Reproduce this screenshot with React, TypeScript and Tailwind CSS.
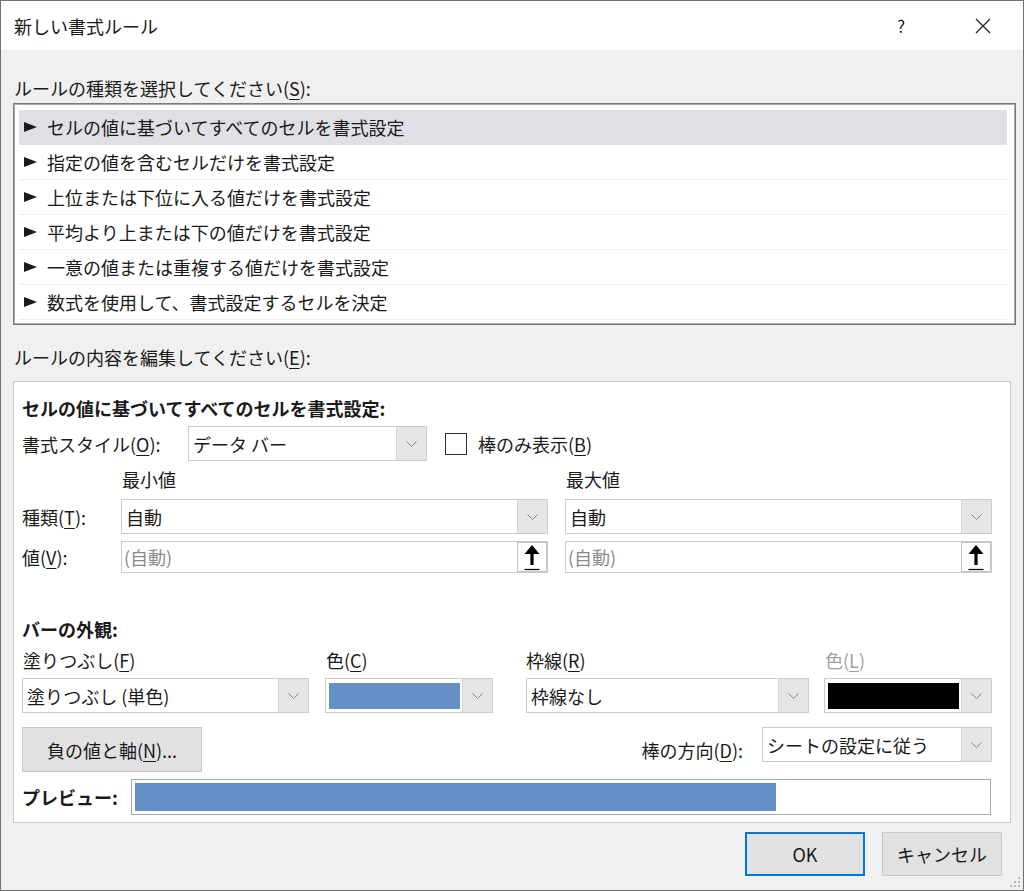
import React from "react";
import clsx from "clsx";

const rules = [
  "セルの値に基づいてすべてのセルを書式設定",
  "指定の値を含むセルだけを書式設定",
  "上位または下位に入る値だけを書式設定",
  "平均より上または下の値だけを書式設定",
  "一意の値または重複する値だけを書式設定",
  "数式を使用して、書式設定するセルを決定",
];

const Chevron = () => (
  <svg width="11" height="6" viewBox="0 0 11 6">
    <path d="M0.5 0.5 L5.5 5.5 L10.5 0.5" fill="none" stroke="#858585" strokeWidth="1" />
  </svg>
);

const UpArrow = () => (
  <svg width="18" height="28" viewBox="0 0 18 28">
    <path d="M9 2 L16.5 11 L10.6 11 L10.6 22 L7.4 22 L7.4 11 L1.5 11 Z" fill="#000" />
    <path d="M1.5 26.5 H16.5" stroke="#000" strokeWidth="1.2" />
  </svg>
);

function Select({ className, children }: { className: string; children: React.ReactNode }) {
  return (
    <div className={clsx("flex border border-[#cccccc] bg-white", className)}>
      <div className="flex-1 min-w-0 flex items-center">{children}</div>
      <div className="w-[30px] flex items-center justify-center bg-[#e5e5e5] border-l border-[#d6d6d6]">
        <Chevron />
      </div>
    </div>
  );
}

function ValueInput({ className }: { className: string }) {
  return (
    <div className={clsx("flex h-[32px] border border-[#cccccc] bg-white", className)}>
      <div className="flex-1 pl-[2px] flex items-center text-[#8a8a8a]">(自動)</div>
      <div className="w-[30px] flex items-center justify-center bg-white border border-[#c4c4c4]">
        <UpArrow />
      </div>
    </div>
  );
}

const U = ({ c }: { c: string }) => <span className="underline underline-offset-[3px] decoration-1">{c}</span>;

export default function App() {
  return (
    <div className="relative w-[1024px] h-[891px] border border-[#707070] bg-[#f0f0f0] flex flex-col text-[18px] leading-[24px] text-[#1a1a1a] font-['Noto_Sans_CJK_JP','Noto_Sans',sans-serif]">
      {/* title bar */}
      <div className="h-[49px] bg-white flex items-center pl-[13px] shrink-0">
        <span>新しい書式ルール</span>
        <span className="ml-auto mr-[70px] text-[17px]">?</span>
        <svg width="16" height="16" viewBox="0 0 16 16" className="mr-[32px]">
          <path d="M1 1 L15 15 M15 1 L1 15" stroke="#222" strokeWidth="1.3" />
        </svg>
      </div>

      <div className="px-[12px] flex flex-col">
        <div className="pt-[26px] pl-[1px]">
          ルールの種類を選択してください(<U c="S" />):
        </div>

        <div className="mt-[3px] w-[1003px] h-[222px] border border-[#7b7b7b] shadow-[inset_0_0_0_1px_#a8a8a8] bg-white p-[6px] pl-[5px] pr-[8px]">
          {rules.map((r, i) => (
            <div
              key={r}
              className={clsx(
                "h-[35px] flex items-center pl-[5px] gap-[10px] border-b",
                i === 0 ? "bg-[#dfdfe5] border-transparent" : "border-[#efefef]"
              )}
            >
              <svg width="13" height="10" viewBox="0 0 13 10">
                <path d="M0 0 L13 5 L0 10 Z" fill="#1a1a1a" />
              </svg>
              <span>{r}</span>
            </div>
          ))}
        </div>

        <div className="mt-[20px] pl-[1px]">
          ルールの内容を編集してください(<U c="E" />):
        </div>

        {/* edit panel */}
        <div className="mt-[12px] w-[998px] h-[442px] border border-[#cacaca] bg-white pl-[8px] pt-[14px] flex flex-col">
          <div className="font-bold">セルの値に基づいてすべてのセルを書式設定:</div>

          <div className="mt-[6px] flex items-center">
            <div className="w-[166px]">
              書式スタイル(<U c="O" />):
            </div>
            <Select className="w-[239px] h-[35px]">
              <span className="pl-[4px]">データ バー</span>
            </Select>
            <div className="ml-[18px] w-[22px] h-[22px] border border-[#333] bg-white" />
            <span className="ml-[11px]">
              棒のみ表示(<U c="B" />)
            </span>
          </div>

          <div className="mt-[6px] flex">
            <div className="ml-[100px] w-[444px]">最小値</div>
            <div>最大値</div>
          </div>

          <div className="mt-[8px] flex items-center">
            <div className="w-[99px]">
              種類(<U c="T" />):
            </div>
            <Select className="w-[427px] h-[35px]">
              <span className="pl-[4px]">自動</span>
            </Select>
            <Select className="ml-[17px] w-[427px] h-[35px]">
              <span className="pl-[4px]">自動</span>
            </Select>
          </div>

          <div className="mt-[7px] flex items-center">
            <div className="w-[99px]">
              値(<U c="V" />):
            </div>
            <ValueInput className="w-[427px]" />
            <ValueInput className="ml-[17px] w-[427px]" />
          </div>

          <div className="mt-[44px] font-bold">バーの外観:</div>

          <div className="mt-[7px] flex">
            <div className="w-[304px] pl-[1px]">
              塗りつぶし(<U c="F" />)
            </div>
            <div className="w-[200px]">
              色(<U c="C" />)
            </div>
            <div className="w-[299px]">
              枠線(<U c="R" />)
            </div>
            <div className="text-[#a0a0a0]">
              色(<U c="L" />)
            </div>
          </div>

          <div className="mt-[6px] flex items-center">
            <Select className="w-[287px] h-[35px]">
              <span className="pl-[4px]">塗りつぶし (単色)</span>
            </Select>
            <Select className="ml-[16px] w-[168px] h-[35px]">
              <div className="ml-[3px] mr-[2px] w-full h-[26px] bg-[#658fc7]" />
            </Select>
            <Select className="ml-[33px] w-[283px] h-[35px]">
              <span className="pl-[4px]">枠線なし</span>
            </Select>
            <Select className="ml-[15px] w-[168px] h-[35px]">
              <div className="ml-[3px] mr-[2px] w-full h-[26px] bg-black" />
            </Select>
          </div>

          <div className="mt-[14px] flex items-start">
            <button className="w-[180px] h-[45px] bg-[#e1e1e1] border border-[#c8c8c8]">
              負の値と軸(<U c="N" />)...
            </button>
            <div className="ml-auto mr-[19px] mt-[11px]">
              棒の方向(<U c="D" />):
            </div>
            <Select className="mr-[18px] w-[230px] h-[35px]">
              <span className="pl-[4px]">シートの設定に従う</span>
            </Select>
          </div>

          <div className="mt-[7px] flex items-center">
            <div className="w-[109px] font-bold">プレビュー:</div>
            <div className="w-[860px] h-[36px] border border-[#a8a8a8] bg-white p-[3px]">
              <div className="w-[641px] h-full bg-[#658fc7]" />
            </div>
          </div>
        </div>

        {/* footer buttons */}
        <div className="mt-[9px] flex justify-end gap-[17px] pr-[9px]">
          <button className="w-[120px] h-[44px] bg-[#e1e1e1] border border-[#0078d7] shadow-[inset_0_0_0_1px_#0078d7]">
            OK
          </button>
          <button className="w-[120px] h-[44px] bg-[#e1e1e1] border border-[#c8c8c8]">
            キャンセル
          </button>
        </div>
      </div>

      {/* resize grip */}
      <svg width="12" height="12" viewBox="0 0 12 12" className="absolute right-[2px] bottom-[2px]">
        {[
          [9, 1],
          [5, 5],
          [9, 5],
          [1, 9],
          [5, 9],
          [9, 9],
        ].map(([x, y]) => (
          <rect key={`${x}-${y}`} x={x} y={y} width="2" height="2" fill="#b8b8b8" />
        ))}
      </svg>
    </div>
  );
}
